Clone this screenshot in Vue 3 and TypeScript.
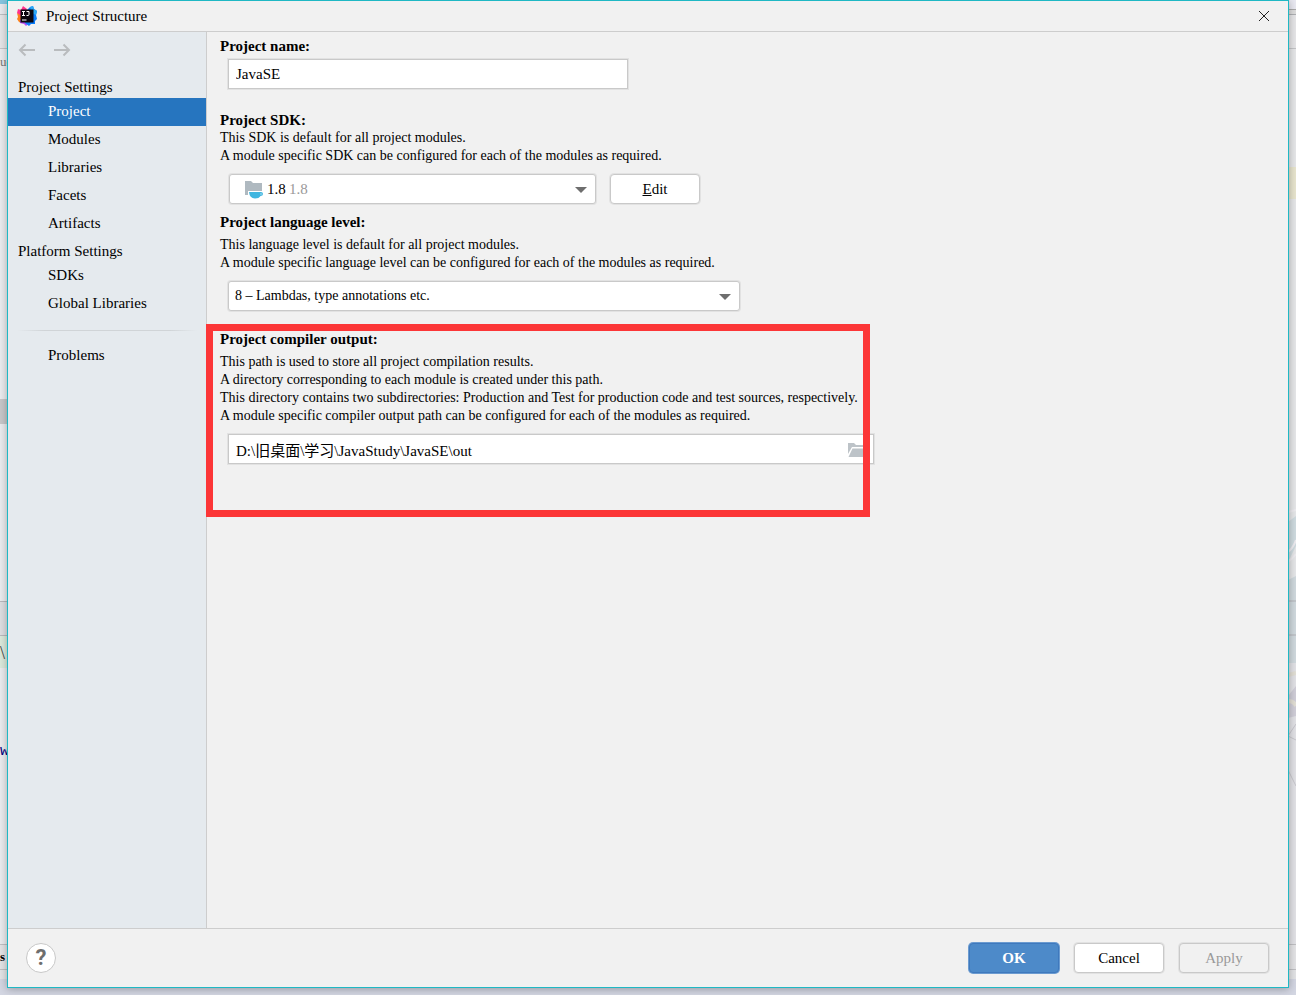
<script setup lang="ts">
import { ref } from 'vue'

interface Band {
  kind: string
  text?: string
}

const projectItems = ['Project', 'Modules', 'Libraries', 'Facets', 'Artifacts']
const platformItems = ['SDKs', 'Global Libraries']
const active = ref('Project')
const projectName = ref('JavaSE')
const sdk = ref('1.8')
const level = ref('8')
const outputPath = ref('D:\\旧桌面\\学习\\JavaStudy\\JavaSE\\out')

const leftBands: Band[] = [
  { kind: 'top-left' },
  { kind: 'toolbar' },
  { kind: 'crumb', text: 'uc' },
  { kind: 'tree' },
  { kind: 'selected' },
  { kind: 'tree-rest' },
  { kind: 'tabs' },
  { kind: 'added', text: '\\' },
  { kind: 'code' },
  { kind: 'keyword', text: 'w' },
  { kind: 'code-rest' },
  { kind: 'status', text: 's' },
  { kind: 'status-end' },
  { kind: 'desktop' },
]
const rightBands: Band[] = [
  { kind: 'top-right' },
  { kind: 'toolbar' },
  { kind: 'editor-top' },
  { kind: 'warning' },
  { kind: 'editor' },
  { kind: 'tabs' },
  { kind: 'console' },
  { kind: 'status' },
  { kind: 'status-end' },
  { kind: 'desktop' },
]
</script>

<template>
  <div class="screen">
    <div class="backdrop">
      <div class="strip">
        <div v-for="band in leftBands" :key="band.kind" class="band" :class="band.kind">{{ band.text }}</div>
      </div>
      <div class="strip">
        <div v-for="band in rightBands" :key="band.kind" class="band" :class="band.kind"></div>
        <svg class="art" width="8" height="290" viewBox="0 0 8 290" fill="none">
          <path d="M0 14 8 8V38L0 54Z" fill="#cfdbe0" />
          <path d="M0 72 8 68V155H0Z" fill="#d0d9de" />
          <path d="M0 188 8 178V208L0 210Z" fill="#d0ced8" />
          <path d="M0 4 8 2M0 44Q5 40 8 32M0 54Q5 50 8 46" stroke="#eeecf0" stroke-width="2" />
          <path d="M0 93H8M0 127H8" stroke="#b4b4b8" />
          <path d="M0 167 8 165M0 193Q6 193 8 198" stroke="#e2dfd5" stroke-width="4" />
          <path d="M0 228 8 216M0 228 8 232M0 262 8 278" stroke="#c8c7cd" />
        </svg>
      </div>
    </div>

    <section class="dialog" role="dialog" aria-labelledby="dialog-title">
      <header class="titlebar">
        <svg class="logo" width="20" height="20" viewBox="0 0 20 20" aria-hidden="true">
          <path d="M1 3 4 4 6 0 10 3 8 8 3 10 0 7Z" fill="#ff318c" />
          <path d="M0 7 3 9 6 13 4 17 2 16 0 13 1 11Z" fill="#fc801d" />
          <path d="M3 17 3 14 8 12 12 17 9 20 7 18Z" fill="#b74af7" />
          <path d="M10 4 13 1 16 0 17 3 20 5 19 9 20 13 18 15 18 18 14 18 12 20 8 17Z" fill="#087cfa" />
          <path d="M13 1 16 0 17 3 20 5 19 9 15 7Z" fill="#2ba8f5" />
          <path d="M3.500 3.500H16.500V16.500H3.500Z" fill="#0b0710" />
          <path d="M5 5.500H8M6.500 5.500V9.500M5 9.500H8M9.500 5.500H12V8.500Q12 9.500 11 9.500H9.500M5 14H9.500" fill="none" stroke="#fff" />
        </svg>
        <h1 id="dialog-title">Project Structure</h1>
        <button class="close" type="button" aria-label="Close">
          <svg width="12" height="12" viewBox="0 0 12 12"><path d="M1 1 11 11M11 1 1 11" stroke="#222" /></svg>
        </button>
      </header>

      <div class="body">
        <nav class="sidebar" aria-label="Settings sections">
          <div class="history">
            <button type="button" aria-label="Back">
              <svg width="18" height="14" viewBox="0 0 18 14"><path d="M17 7H2M7.500 1.500 2 7 7.500 12.500" /></svg>
            </button>
            <button type="button" aria-label="Forward">
              <svg width="18" height="14" viewBox="0 0 18 14"><path d="M1 7H16M10.500 1.500 16 7 10.500 12.500" /></svg>
            </button>
          </div>
          <h2>Project Settings</h2>
          <button
            v-for="item in projectItems"
            :key="item"
            type="button"
            class="item"
            :class="{ active: active === item }"
            @click="active = item"
          >{{ item }}</button>
          <h2>Platform Settings</h2>
          <button
            v-for="item in platformItems"
            :key="item"
            type="button"
            class="item"
            :class="{ active: active === item }"
            @click="active = item"
          >{{ item }}</button>
          <hr />
          <button type="button" class="item" :class="{ active: active === 'Problems' }" @click="active = 'Problems'">Problems</button>
        </nav>

        <main class="content">
          <section class="group name">
            <label class="heading" for="project-name">Project name:</label>
            <input id="project-name" v-model="projectName" class="field short" type="text" />
          </section>

          <section class="group sdk">
            <label class="heading" for="project-sdk">Project SDK:</label>
            <p>This SDK is default for all project modules.<br />A module specific SDK can be configured for each of the modules as required.</p>
            <div class="row">
              <div class="combo sdk-combo">
                <select id="project-sdk" v-model="sdk">
                  <option value="1.8">1.8</option>
                </select>
                <span class="sdk-mark">
                  <svg width="20" height="18" viewBox="0 0 20 18" aria-hidden="true">
                    <path d="M1 0H7L9 2H18V10H4V14H1Z" fill="#afb9c0" />
                    <path d="M5 11H17Q19 11 19 13T16.500 15Q15 17.500 11 17.500Q5.500 17 5 11Z" fill="#40b6e0" />
                    <path d="M16.500 12.500H17.500V13.500H16.500Z" fill="#fff" />
                  </svg>
                </span>
                <span class="sdk-version">1.8</span>
                <svg class="arrow" width="12" height="6" viewBox="0 0 12 6" aria-hidden="true"><path d="M0 0H12L6 6Z" fill="#6e6e6e" /></svg>
              </div>
              <button class="btn" type="button"><span><u>E</u>dit</span></button>
            </div>
          </section>

          <section class="group level">
            <label class="heading" for="language-level">Project language level:</label>
            <p>This language level is default for all project modules.<br />A module specific language level can be configured for each of the modules as required.</p>
            <div class="combo level-combo">
              <select id="language-level" v-model="level">
                <option value="8">8 – Lambdas, type annotations etc.</option>
              </select>
              <svg class="arrow" width="12" height="6" viewBox="0 0 12 6" aria-hidden="true"><path d="M0 0H12L6 6Z" fill="#6e6e6e" /></svg>
            </div>
          </section>

          <section class="group output">
            <label class="heading" for="compiler-output">Project compiler output:</label>
            <p>This path is used to store all project compilation results.<br />A directory corresponding to each module is created under this path.<br />This directory contains two subdirectories: Production and Test for production code and test sources, respectively.<br />A module specific compiler output path can be configured for each of the modules as required.</p>
            <div class="path">
              <input id="compiler-output" v-model="outputPath" class="field" type="text" />
              <button class="browse" type="button" aria-label="Browse">
                <svg width="20" height="16" viewBox="0 0 20 16"><path d="M1 1H7L9 3H17V5H5L1 12Z" fill="#bdc3c8" /><path d="M5.500 6.500H20L16.500 15H1.500Z" fill="#bdc3c8" /></svg>
              </button>
            </div>
            <div class="marker"></div>
          </section>
        </main>
      </div>

      <footer class="footer">
        <button class="help" type="button" aria-label="Help">?</button>
        <div class="actions">
          <button class="btn primary" type="button">OK</button>
          <button class="btn" type="button">Cancel</button>
          <button class="btn" type="button" disabled>Apply</button>
        </div>
      </footer>
    </section>
  </div>
</template>

<style>
body {
  margin: 0;
}
</style>

<style scoped>
* {
  box-sizing: border-box;
}
.screen {
  position: relative;
  display: flex;
  min-height: 100vh;
  padding: 0 7px 7px;
  overflow: hidden;
  color: #000;
  font: 15px/18px "Liberation Serif", "Noto Sans CJK SC", serif;
}
button,
input,
select {
  margin: 0;
  font: inherit;
  color: inherit;
}
button {
  padding: 0;
  border: 0;
  background: none;
}
svg {
  display: block;
}

.backdrop {
  position: absolute;
  inset: 0;
  display: flex;
  justify-content: space-between;
}
.strip {
  position: relative;
  display: flex;
  flex-direction: column;
  width: 8px;
}
.band {
  flex: none;
  background: #ebecef;
  white-space: nowrap;
}
.top-left {
  height: 15px;
  border-bottom: 1px solid #bdbfc2;
  background: linear-gradient(#86c5df 4px, #e9eaee 4px);
}
.top-right {
  height: 15px;
  border-bottom: 1px solid #aeb0b3;
  background: linear-gradient(#e9e9f1 9px, #aaa 9px, #aaa 10px, #ddd 10px);
}
.toolbar {
  height: 34px;
  border-bottom: 1px solid #c4c5c7;
  background: #e6e6e8;
}
.crumb {
  height: 30px;
  color: #777;
  font-size: 13px;
  line-height: 26px;
}
.tree {
  height: 320px;
}
.selected {
  height: 25px;
  background: #c8c8ca;
}
.tree-rest {
  height: 177px;
}
.tabs {
  height: 35px;
  border-top: 1px solid #b9b9bd;
  border-bottom: 1px solid #b9b9bd;
  background: #dedfe2;
}
.added {
  height: 32px;
  background: #dbeadc;
  color: #444;
  font-size: 18px;
  line-height: 34px;
}
.code {
  height: 72px;
}
.keyword {
  height: 24px;
  color: #000080;
  font: 15px/24px "Liberation Mono", monospace;
}
.code-rest {
  height: 180px;
}
.status {
  height: 26px;
  border-top: 1px solid #c0c0c3;
  border-bottom: 1px solid #c0c0c3;
  background: #e4e4e6;
  font-size: 13px;
  font-weight: bold;
  line-height: 24px;
}
.status-end {
  height: 9px;
  background: #e3e4e6;
}
.desktop {
  flex: 1 1 16px;
  background: #d3d6e2;
}
.editor-top {
  height: 118px;
  background: #e6e7e9;
}
.warning {
  height: 32px;
  background: #e8e5ce;
}
.editor {
  height: 402px;
  background: #e6e7e9;
}
.console {
  height: 308px;
  background: #e2e2e6;
}
.art {
  position: absolute;
  top: 508px;
  right: 0;
}
.backdrop::after {
  content: "";
  position: absolute;
  inset: auto 0 0;
  height: 8px;
  background: #d3d6e2;
}

.dialog {
  position: relative;
  display: flex;
  flex: 1;
  flex-direction: column;
  border: 1px solid #1fb8c4;
  background: #f1f1f1;
  box-shadow: 0 1px 8px rgba(0, 0, 0, 0.3);
}
.titlebar {
  display: flex;
  align-items: center;
  height: 31px;
  padding: 0 18px 0 9px;
  border-bottom: 1px solid #cdcdcd;
}
.titlebar h1 {
  flex: 1;
  margin: 0 0 0 9px;
  font: inherit;
}
.body {
  display: flex;
  flex: 1;
}
.sidebar {
  display: flex;
  flex: none;
  flex-direction: column;
  width: 199px;
  border-right: 1px solid #cdcdcd;
  background: #e5eaee;
}
.history {
  display: flex;
  gap: 17px;
  height: 42px;
  padding: 11px 10px 0;
}
.history button {
  height: 14px;
}
.history path {
  fill: none;
  stroke: #b9bcbe;
  stroke-width: 2;
}
.sidebar h2 {
  height: 24px;
  margin: 0;
  padding: 1px 10px 0;
  font: inherit;
  line-height: 24px;
}
.item {
  height: 28px;
  padding: 0 0 2px 40px;
  text-align: left;
}
.item.active {
  background: #2675bf;
  color: #fff;
}
hr {
  width: 180px;
  height: 1px;
  margin: 12px 9px 11px;
  border: 0;
  background: linear-gradient(90deg, transparent, #d0d4d7 15%, #d0d4d7 85%, transparent);
}

.content {
  flex: 1;
  padding: 5px 13px;
}
.heading {
  display: block;
  font-weight: bold;
}
p {
  margin: 0;
  font-size: 14px;
}
.field {
  display: block;
  width: 100%;
  height: 30px;
  padding: 0 7px;
  border: 1px solid #c9c9c9;
  border-radius: 0;
  background: #fff;
  box-shadow: 0 0 0 1px #e2e2e2;
  outline: 0;
}
.name .field {
  width: 400px;
  margin: 4px 0 0 8px;
}
.sdk {
  margin-top: 22px;
}
.row {
  display: flex;
  gap: 14px;
  margin: 9px 0 0 9px;
}
.combo {
  position: relative;
  height: 30px;
}
.combo select {
  width: 100%;
  height: 100%;
  padding: 0 30px 0 6px;
  border: 1px solid #c9c9c9;
  border-radius: 3px;
  background: #fff;
  box-shadow: 0 0 0 1px #e2e2e2;
  appearance: none;
  outline: 0;
}
.sdk-combo {
  width: 367px;
}
.sdk-combo select {
  padding-left: 37px;
}
.sdk-mark,
.sdk-version,
.arrow {
  position: absolute;
  pointer-events: none;
}
.sdk-mark {
  top: 7px;
  left: 15px;
}
.sdk-version {
  top: 6px;
  left: 60px;
  color: #999;
}
.arrow {
  top: 13px;
  right: 9px;
}
.btn {
  width: 90px;
  height: 30px;
  border: 1px solid #c9c9c9;
  border-radius: 4px;
  background: #fff;
  box-shadow: 0 0 0 1px #e2e2e2;
}
.level {
  margin-top: 9px;
}
.level p,
.output p {
  margin-top: 5px;
}
.level-combo {
  width: 512px;
  margin: 9px 0 0 8px;
}
.level-combo select {
  font-size: 14px;
}
.output {
  position: relative;
  margin-top: 19px;
}
.path {
  position: relative;
  width: 646px;
  margin: 9px 0 0 8px;
}
.browse {
  position: absolute;
  top: 8px;
  right: 7px;
}
.marker {
  position: absolute;
  top: -6px;
  left: -14px;
  width: 664px;
  height: 193px;
  border: 7px solid #fc3637;
  pointer-events: none;
}

.footer {
  display: flex;
  align-items: center;
  justify-content: space-between;
  height: 59px;
  padding: 0 19px 0 18px;
  border-top: 1px solid #cdcdcd;
}
.help {
  width: 30px;
  height: 30px;
  border: 1px solid #c8c8c8;
  border-radius: 50%;
  background: #fff;
  color: #6e6e6e;
  font: bold 22px/28px Roboto, sans-serif;
}
.actions {
  display: flex;
  gap: 15px;
}
.primary {
  border-color: #3f79bd;
  background: #4d8ac9;
  box-shadow: 0 0 0 1px #6b9bd0;
  color: #fff;
  font-weight: bold;
}
.btn:disabled {
  background: #f1f1f1;
  color: #999;
}
</style>
